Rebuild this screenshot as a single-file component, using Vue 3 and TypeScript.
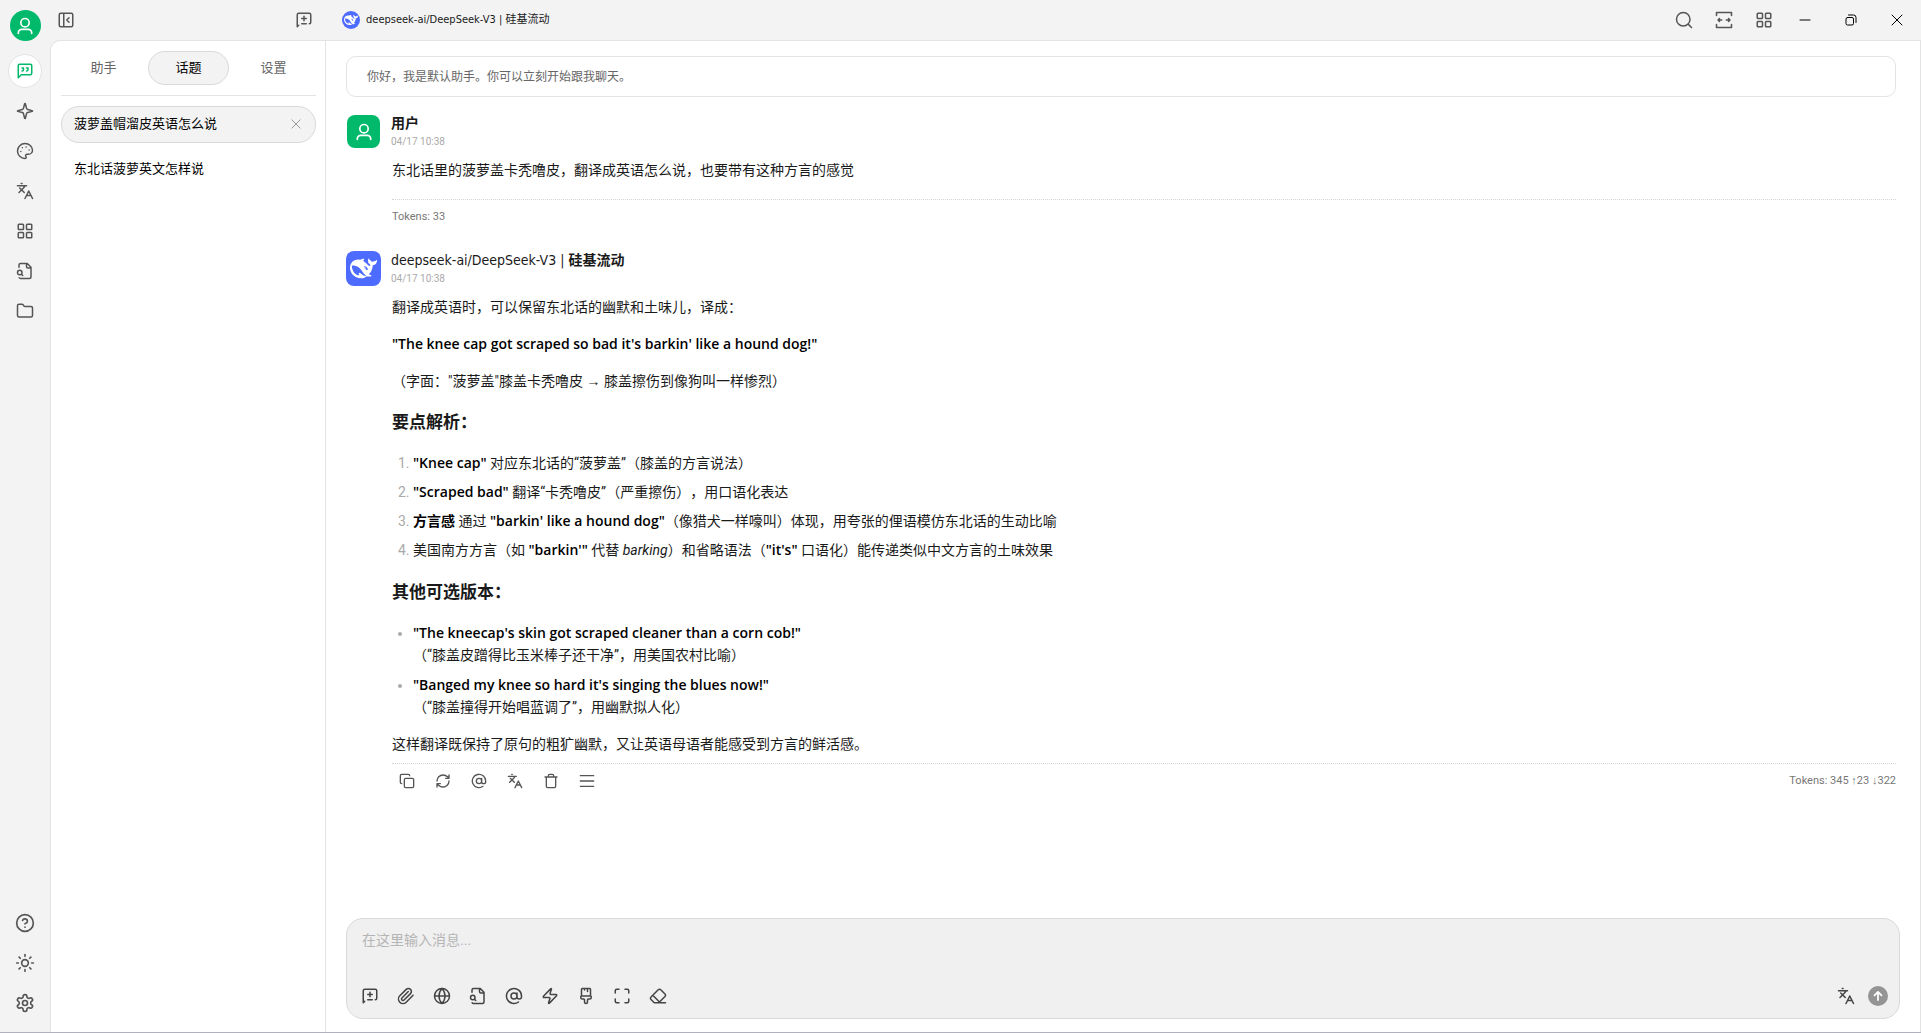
<script setup lang="ts">
import { h, ref, type FunctionalComponent } from 'vue'

const icons = {
  panel: 'M5 3h14a2 2 0 0 1 2 2v14a2 2 0 0 1-2 2H5a2 2 0 0 1-2-2V5a2 2 0 0 1 2-2z M9 3v18 M16 15l-3-3 3-3',
  newTopic: 'm5 19-2 2V5c0-1.1.9-2 2-2h14a2 2 0 0 1 2 2v10a2 2 0 0 1-2 2 M9 10h6 M12 7v6 M9 17h6',
  chat: 'M21 15a2 2 0 0 1-2 2H7l-4 4V5a2 2 0 0 1 2-2h14a2 2 0 0 1 2 2z M8 12a2 2 0 0 0 2-2V8H8 M14 12a2 2 0 0 0 2-2V8h-2',
  sparkle: 'M9.937 15.5A2 2 0 0 0 8.5 14.063l-6.135-1.582a.5.5 0 0 1 0-.962L8.5 9.936A2 2 0 0 0 9.937 8.5l1.582-6.135a.5.5 0 0 1 .963 0L14.063 8.5A2 2 0 0 0 15.5 9.937l6.135 1.581a.5.5 0 0 1 0 .964L15.5 14.063a2 2 0 0 0-1.437 1.437l-1.582 6.135a.5.5 0 0 1-.963 0z',
  palette: 'M12 2C6.5 2 2 6.5 2 12s4.5 10 10 10c.926 0 1.648-.746 1.648-1.688 0-.437-.18-.835-.437-1.125-.29-.289-.438-.652-.438-1.125a1.64 1.64 0 0 1 1.668-1.668h1.996c3.051 0 5.555-2.503 5.555-5.554C21.965 6.012 17.461 2 12 2z M13.5 6.5h.01 M17.5 10.5h.01 M8.5 7.5h.01 M6.5 12.5h.01',
  translate: 'm5 8 6 6 M4 14l6-6 2-3 M2 5h12 M7 2h1 M22 22l-5-10-5 10 M14 18h6',
  grid: 'M4 3h5a1 1 0 0 1 1 1v5a1 1 0 0 1-1 1H4a1 1 0 0 1-1-1V4a1 1 0 0 1 1-1z M15 3h5a1 1 0 0 1 1 1v5a1 1 0 0 1-1 1h-5a1 1 0 0 1-1-1V4a1 1 0 0 1 1-1z M15 14h5a1 1 0 0 1 1 1v5a1 1 0 0 1-1 1h-5a1 1 0 0 1-1-1v-5a1 1 0 0 1 1-1z M4 14h5a1 1 0 0 1 1 1v5a1 1 0 0 1-1 1H4a1 1 0 0 1-1-1v-5a1 1 0 0 1 1-1z',
  fileSearch: 'M14 2v4a2 2 0 0 0 2 2h4 M4.268 21a2 2 0 0 0 1.727 1H18a2 2 0 0 0 2-2V7l-5-5H6a2 2 0 0 0-2 2v3 M9 18l-1.5-1.5 M8 14a3 3 0 1 1-6 0 3 3 0 0 1 6 0z',
  folder: 'M20 20a2 2 0 0 0 2-2V8a2 2 0 0 0-2-2h-7.9a2 2 0 0 1-1.69-.9L9.6 3.9A2 2 0 0 0 7.93 3H4a2 2 0 0 0-2 2v13a2 2 0 0 0 2 2z',
  help: 'M22 12a10 10 0 1 1-20 0 10 10 0 0 1 20 0z M9.09 9a3 3 0 0 1 5.83 1c0 2-3 3-3 3 M12 17h.01',
  sun: 'M16 12a4 4 0 1 1-8 0 4 4 0 0 1 8 0z M12 2v2 M12 20v2 M4.93 4.93l1.41 1.41 M17.66 17.66l1.41 1.41 M2 12h2 M20 12h2 M6.34 17.66l-1.41 1.41 M19.07 4.93l-1.41 1.41',
  settings: 'M12.22 2h-.44a2 2 0 0 0-2 2v.18a2 2 0 0 1-1 1.73l-.43.25a2 2 0 0 1-2 0l-.15-.08a2 2 0 0 0-2.73.73l-.22.38a2 2 0 0 0 .73 2.73l.15.1a2 2 0 0 1 1 1.72v.51a2 2 0 0 1-1 1.74l-.15.09a2 2 0 0 0-.73 2.73l.22.38a2 2 0 0 0 2.73.73l.15-.08a2 2 0 0 1 2 0l.43.25a2 2 0 0 1 1 1.73V20a2 2 0 0 0 2 2h.44a2 2 0 0 0 2-2v-.18a2 2 0 0 1 1-1.73l.43-.25a2 2 0 0 1 2 0l.15.08a2 2 0 0 0 2.73-.73l.22-.39a2 2 0 0 0-.73-2.73l-.15-.08a2 2 0 0 1-1-1.74v-.5a2 2 0 0 1 1-1.74l.15-.09a2 2 0 0 0 .73-2.73l-.22-.38a2 2 0 0 0-2.73-.73l-.15.08a2 2 0 0 1-2 0l-.43-.25a2 2 0 0 1-1-1.73V4a2 2 0 0 0-2-2z M15 12a3 3 0 1 1-6 0 3 3 0 0 1 6 0z',
  search: 'M20 11a9 9 0 1 1-18 0 9 9 0 0 1 18 0z M22 22l-4.5-4.5',
  width: 'M2 6V2h20v4 M2 18v4h20v-4 M4 12h5 M6 10l-2 2 2 2 M15 12h5 M18 10l2 2-2 2',
  minimize: 'M2 12h20',
  restore: 'M5 7h9a3 3 0 0 1 3 3v9a3 3 0 0 1-3 3H5a3 3 0 0 1-3-3v-9a3 3 0 0 1 3-3z M7 2h10a5 5 0 0 1 5 5v10',
  close: 'M2 2l20 20 M22 2L2 22',
  copy: 'M10 8h10a2 2 0 0 1 2 2v10a2 2 0 0 1-2 2H10a2 2 0 0 1-2-2V10a2 2 0 0 1 2-2z M4 16c-1.1 0-2-.9-2-2V4c0-1.1.9-2 2-2h10c1.1 0 2 .9 2 2',
  refresh: 'M3 12a9 9 0 0 1 9-9 9.75 9.75 0 0 1 6.74 2.74L21 8 M21 3v5h-5 M21 12a9 9 0 0 1-9 9 9.75 9.75 0 0 1-6.74-2.74L3 16 M8 16H3v5',
  at: 'M16 12a4 4 0 1 1-8 0 4 4 0 0 1 8 0z M16 8v5a3 3 0 0 0 6 0v-1a10 10 0 1 0-4 8',
  trash: 'M3 6h18 M19 6v14a2 2 0 0 1-2 2H7a2 2 0 0 1-2-2V6 M8 6V4a2 2 0 0 1 2-2h4a2 2 0 0 1 2 2v2',
  menu: 'M2 4h20 M2 12h20 M2 20h20',
  clip: 'm21.44 11.05-9.19 9.19a6 6 0 0 1-8.49-8.49l8.57-8.57A4 4 0 1 1 18 8.84l-8.59 8.57a2 2 0 0 1-2.83-2.83l8.49-8.48',
  globe: 'M22 12a10 10 0 1 1-20 0 10 10 0 0 1 20 0z M12 2a14.5 14.5 0 0 0 0 20 14.5 14.5 0 0 0 0-20 M2 12h20',
  zap: 'M4 14a1 1 0 0 1-.78-1.63l9.9-10.2a.5.5 0 0 1 .86.46l-1.92 6.02A1 1 0 0 0 13 10h7a1 1 0 0 1 .78 1.63l-9.9 10.2a.5.5 0 0 1-.86-.46l1.92-6.02A1 1 0 0 0 11 14z',
  brush: 'M10 2v2 M14 2v4 M17 2a1 1 0 0 1 1 1v9H6V3a1 1 0 0 1 1-1z M6 12a1 1 0 0 0-1 1v1a2 2 0 0 0 2 2h2a1 1 0 0 1 1 1v2.9a2 2 0 1 0 4 0V17a1 1 0 0 1 1-1h2a2 2 0 0 0 2-2v-1a1 1 0 0 0-1-1',
  expand: 'M8 3H5a2 2 0 0 0-2 2v3 M21 8V5a2 2 0 0 0-2-2h-3 M3 16v3a2 2 0 0 0 2 2h3 M16 21h3a2 2 0 0 0 2-2v-3',
  eraser: 'm7 21-4.3-4.3c-1-1-1-2.5 0-3.4l9.6-9.6c1-1 2.5-1 3.4 0l5.6 5.6c1 1 1 2.5 0 3.4L13 21 M22 21H7 M5 11l9 9',
  send: 'M12 19V5 M6 11l6-6 6 6',
  person: 'M17 8a5 5 0 1 1-10 0 5 5 0 0 1 10 0z M4 21v-1a4 4 0 0 1 4-4h8a4 4 0 0 1 4 4v1',
}
type IconName = keyof typeof icons

const whale = 'M23.748 4.482c-.254-.124-.364.113-.512.234-.051.039-.094.09-.137.136-.372.397-.806.657-1.373.626-.829-.046-1.537.214-2.163.848-.133-.782-.575-1.248-1.247-1.548-.352-.156-.708-.311-.955-.65-.172-.241-.219-.51-.305-.774-.055-.16-.11-.323-.293-.35-.2-.031-.278.136-.356.276-.313.572-.434 1.202-.422 1.84.027 1.436.633 2.58 1.838 3.393.137.093.172.187.129.323-.082.28-.18.552-.266.833-.055.179-.137.217-.329.14a5.526 5.526 0 01-1.736-1.18c-.857-.828-1.631-1.742-2.597-2.458a11.365 11.365 0 00-.689-.471c-.985-.957.13-1.743.388-1.836.27-.098.093-.432-.779-.428-.872.004-1.67.295-2.687.684a3.055 3.055 0 01-.465.137 9.597 9.597 0 00-2.883-.102c-1.885.21-3.39 1.102-4.497 2.623C.082 8.606-.231 10.684.152 12.85c.403 2.284 1.569 4.175 3.36 5.653 1.858 1.533 3.997 2.284 6.438 2.14 1.482-.085 3.133-.284 4.994-1.86.47.234.962.327 1.78.397.63.059 1.236-.03 1.705-.128.735-.156.684-.837.419-.961-2.155-1.004-1.682-.595-2.113-.926 1.096-1.296 2.746-2.642 3.392-7.003.05-.347.007-.565 0-.845-.004-.17.035-.237.23-.256a4.173 4.173 0 001.545-.475c1.396-.763 1.96-2.015 2.093-3.517.02-.23-.004-.467-.247-.588zM11.581 18c-2.089-1.642-3.102-2.183-3.52-2.16-.392.024-.321.471-.235.763.09.288.207.486.371.739.114.167.192.416-.113.603-.673.416-1.842-.14-1.897-.167-1.361-.802-2.5-1.86-3.301-3.307-.774-1.393-1.224-2.887-1.298-4.482-.02-.386.093-.522.477-.592a4.696 4.696 0 011.529-.039c2.132.312 3.946 1.265 5.468 2.774.868.86 1.525 1.887 2.202 2.891.72 1.066 1.494 2.082 2.48 2.914.348.292.625.514.891.677-.802.09-2.14.11-3.054-.614zm1-6.44a.306.306 0 01.415-.287.302.302 0 01.2.288.306.306 0 01-.31.307.303.303 0 01-.304-.308zm3.11 1.596c-.2.081-.399.151-.59.16a1.245 1.245 0 01-.798-.254c-.274-.23-.47-.358-.552-.758a1.73 1.73 0 01.016-.588c.07-.327-.008-.537-.239-.727-.187-.156-.426-.199-.688-.199a.559.559 0 01-.254-.078c-.11-.054-.2-.19-.114-.358.028-.054.16-.186.192-.21.356-.202.767-.136 1.146.016.352.144.618.408 1.001.782.391.451.462.576.685.914.176.265.336.537.445.848.067.195-.019.354-.25.452z'

const Icon: FunctionalComponent<{ name: IconName; size?: number; stroke?: number }> = (p) =>
  h('svg', {
    width: p.size ?? 18, height: p.size ?? 18, viewBox: '0 0 24 24', fill: 'none',
    stroke: 'currentColor', 'stroke-width': p.stroke ?? 2,
    'stroke-linecap': 'round', 'stroke-linejoin': 'round', 'aria-hidden': 'true',
  }, [h('path', { d: icons[p.name] })])
Icon.props = ['name', 'size', 'stroke']

interface Action { icon: IconName; label: string }

const nav: Action[] = [
  { icon: 'chat', label: '聊天' },
  { icon: 'sparkle', label: '智能体' },
  { icon: 'palette', label: '绘画' },
  { icon: 'translate', label: '翻译' },
  { icon: 'grid', label: '小程序' },
  { icon: 'fileSearch', label: '知识库' },
  { icon: 'folder', label: '文件' },
]
const navBottom: Action[] = [
  { icon: 'help', label: '帮助' },
  { icon: 'sun', label: '主题' },
  { icon: 'settings', label: '设置' },
]
const tabs = ['助手', '话题', '设置']
const activeTab = ref('话题')
const topics = ['菠萝盖帽溜皮英语怎么说', '东北话菠萝英文怎样说']
const activeTopic = ref(0)
const topActions: Action[] = [
  { icon: 'search', label: '搜索' },
  { icon: 'width', label: '宽度' },
  { icon: 'grid', label: '小程序' },
]
const windowActions: Action[] = [
  { icon: 'minimize', label: '最小化' },
  { icon: 'restore', label: '还原' },
  { icon: 'close', label: '关闭' },
]
const messageActions: Action[] = [
  { icon: 'copy', label: '复制' },
  { icon: 'refresh', label: '重新生成' },
  { icon: 'at', label: '提及' },
  { icon: 'translate', label: '翻译' },
  { icon: 'trash', label: '删除' },
  { icon: 'menu', label: '更多' },
]
const tools: Action[] = [
  { icon: 'newTopic', label: '新话题' },
  { icon: 'clip', label: '附件' },
  { icon: 'globe', label: '联网' },
  { icon: 'fileSearch', label: '知识库' },
  { icon: 'at', label: '提及' },
  { icon: 'zap', label: '快捷短语' },
  { icon: 'brush', label: '清空' },
  { icon: 'expand', label: '展开' },
  { icon: 'eraser', label: '清除上下文' },
]
const draft = ref('')
</script>

<template>
  <div class="app">
    <nav class="rail">
      <span class="avatar round"><Icon name="person" :size="20" /></span>
      <button v-for="(n, i) in nav" :key="n.label" class="rail-btn" :class="{ active: i === 0 }" :aria-label="n.label">
        <Icon :name="n.icon" />
      </button>
      <span class="spacer"></span>
      <button v-for="n in navBottom" :key="n.label" class="rail-btn" :aria-label="n.label">
        <Icon :name="n.icon" :size="20" />
      </button>
    </nav>

    <div class="shell">
      <header class="topbar">
        <div class="topbar-left">
          <button class="icon-btn" aria-label="收起侧栏"><Icon name="panel" /></button>
          <button class="icon-btn" aria-label="新建话题"><Icon name="newTopic" /></button>
        </div>
        <button class="model">
          <span class="brand"><svg viewBox="0 0 24 24" width="14" height="14" aria-hidden="true"><path :d="whale" fill="#fff" /></svg></span>
          deepseek-ai/DeepSeek-V3 | 硅基流动
        </button>
        <span class="spacer"></span>
        <div class="top-actions">
          <button v-for="a in topActions" :key="a.label" class="icon-btn" :aria-label="a.label"><Icon :name="a.icon" /></button>
        </div>
        <div class="window-actions">
          <button v-for="a in windowActions" :key="a.label" class="win-btn" :aria-label="a.label"><Icon :name="a.icon" :size="12" /></button>
        </div>
      </header>

      <div class="panel">
        <aside class="topics">
          <div class="tabs" role="tablist">
            <button v-for="t in tabs" :key="t" role="tab" class="tab" :class="{ active: t === activeTab }" :aria-selected="t === activeTab" @click="activeTab = t">{{ t }}</button>
          </div>
          <ul class="topic-list">
            <li v-for="(t, i) in topics" :key="t" class="topic" :class="{ active: i === activeTopic }">
              <button class="topic-name" @click="activeTopic = i">{{ t }}</button>
              <button v-if="i === activeTopic" class="topic-close" aria-label="删除话题"><Icon name="close" :size="10" /></button>
            </li>
          </ul>
        </aside>

        <main class="chat">
          <div class="messages">
            <div class="prompt">你好，我是默认助手。你可以立刻开始跟我聊天。</div>

            <article class="message">
              <header class="who">
                <span class="avatar square"><Icon name="person" :size="20" /></span>
                <div>
                  <div class="name"><b>用户</b></div>
                  <time class="date">04/17 10:38</time>
                </div>
              </header>
              <div class="content">
                <p>东北话里的菠萝盖卡秃噜皮，翻译成英语怎么说，也要带有这种方言的感觉</p>
              </div>
              <footer class="foot user-foot"><span class="tokens">Tokens: 33</span></footer>
            </article>

            <article class="message">
              <header class="who">
                <span class="logo"><svg viewBox="0 0 24 24" width="27" height="27" aria-hidden="true"><path :d="whale" fill="#fff" /></svg></span>
                <div>
                  <div class="name">deepseek-ai/DeepSeek-V3 | <b>硅基流动</b></div>
                  <time class="date">04/17 10:38</time>
                </div>
              </header>
              <div class="content">
                <p>翻译成英语时，可以保留东北话的幽默和土味儿，译成：</p>
                <p><strong>"The knee cap got scraped so bad it's barkin' like a hound dog!"</strong></p>
                <p>（字面："菠萝盖"膝盖卡秃噜皮 → 膝盖擦伤到像狗叫一样惨烈）</p>
                <h3>要点解析：</h3>
                <ol>
                  <li><strong>"Knee cap"</strong> 对应东北话的“菠萝盖”（膝盖的方言说法）</li>
                  <li><strong>"Scraped bad"</strong> 翻译“卡秃噜皮”（严重擦伤），用口语化表达</li>
                  <li><strong>方言感</strong> 通过 <strong>"barkin' like a hound dog"</strong>（像猎犬一样嚎叫）体现，用夸张的俚语模仿东北话的生动比喻</li>
                  <li>美国南方方言（如 <strong>"barkin'"</strong> 代替 <em>barking</em>）和省略语法（<strong>"it's"</strong> 口语化）能传递类似中文方言的土味效果</li>
                </ol>
                <h3>其他可选版本：</h3>
                <ul>
                  <li><strong>"The kneecap's skin got scraped cleaner than a corn cob!"</strong><br />（“膝盖皮蹭得比玉米棒子还干净”，用美国农村比喻）</li>
                  <li><strong>"Banged my knee so hard it's singing the blues now!"</strong><br />（“膝盖撞得开始唱蓝调了”，用幽默拟人化）</li>
                </ul>
                <p>这样翻译既保持了原句的粗犷幽默，又让英语母语者能感受到方言的鲜活感。</p>
              </div>
              <footer class="foot">
                <div class="actions">
                  <button v-for="a in messageActions" :key="a.label" class="tool" :aria-label="a.label"><Icon :name="a.icon" :size="16" /></button>
                </div>
                <span class="tokens">Tokens: 345 ↑23 ↓322</span>
              </footer>
            </article>
          </div>

          <form class="composer" @submit.prevent>
            <textarea v-model="draft" rows="2" placeholder="在这里输入消息..." aria-label="消息"></textarea>
            <div class="toolbar">
              <button v-for="t in tools" :key="t.label" type="button" class="tool" :aria-label="t.label"><Icon :name="t.icon" /></button>
              <span class="spacer"></span>
              <button type="button" class="tool" aria-label="翻译"><Icon name="translate" /></button>
              <button type="submit" class="send" aria-label="发送"><Icon name="send" :size="14" :stroke="3" /></button>
            </div>
          </form>
        </main>
      </div>
    </div>
  </div>
</template>

<style>
body {
  margin: 0;
}
</style>

<style scoped>
.app {
  --line: #e3e3e3;
  --green: #00b96b;
  --blue: #4d6bfe;
  box-sizing: border-box;
  display: flex;
  height: 100vh;
  background: #f3f3f3;
  border-bottom: 1px solid #b1b1bd;
  color: #1a1a1a;
  font: 14px/22px Roboto, "Liberation Sans", "Noto Sans CJK SC", sans-serif;
  text-spacing-trim: space-all;
}
button {
  display: flex;
  align-items: center;
  justify-content: center;
  padding: 0;
  border: 0;
  background: none;
  color: #555;
  font: inherit;
  cursor: pointer;
}
svg {
  display: block;
  flex: none;
}
.spacer {
  flex: 1;
}

/* icon rail */
.rail {
  display: flex;
  flex-direction: column;
  align-items: center;
  gap: 6px;
  width: 50px;
  padding: 10px 0 12px;
  box-sizing: border-box;
}
.avatar {
  display: flex;
  align-items: center;
  justify-content: center;
  background: var(--green);
  color: #fff;
}
.round {
  width: 31px;
  height: 31px;
  margin-bottom: 7px;
  border-radius: 50%;
}
.rail-btn {
  box-sizing: border-box;
  width: 34px;
  height: 34px;
  border: 1px solid transparent;
  border-radius: 50%;
}
.rail-btn.active {
  background: #fff;
  border-color: var(--line);
  color: var(--green);
}

/* top bar */
.shell {
  display: flex;
  flex: 1;
  flex-direction: column;
  min-width: 0;
}
.topbar {
  display: flex;
  align-items: center;
  height: 40px;
}
.topbar-left {
  box-sizing: border-box;
  display: flex;
  justify-content: space-between;
  width: 275px;
  padding: 0 12px 0 7px;
}
.icon-btn {
  width: 18px;
  height: 34px;
}
.model {
  gap: 6px;
  padding-left: 17px;
  color: #1a1a1a;
  font-family: "DejaVu Sans Condensed", "Noto Sans CJK SC", sans-serif;
  font-size: 11px;
  line-height: 20px;
}
.brand {
  display: flex;
  align-items: center;
  justify-content: center;
  width: 18px;
  height: 18px;
  border-radius: 50%;
  background: var(--blue);
}
.top-actions {
  display: flex;
  gap: 22px;
}
.window-actions {
  display: flex;
  margin: 0 1px 0 9px;
}
.win-btn {
  width: 46px;
  height: 34px;
  color: #000;
}

/* topic column */
.panel {
  display: flex;
  flex: 1;
  min-height: 0;
  background: #fff;
  border: 1px solid var(--line);
  border-bottom: 0;
  border-radius: 10px 0 0 0;
}
.topics {
  box-sizing: border-box;
  width: 275px;
  padding: 0 9px 0 10px;
  border-right: 1px solid var(--line);
  font-size: 13px;
}
.tabs {
  display: flex;
  gap: 4px;
  padding: 10px 2px;
  border-bottom: 1px solid var(--line);
}
.tab {
  box-sizing: border-box;
  flex: 1;
  height: 34px;
  border: 1px solid transparent;
  border-radius: 17px;
  color: #666;
}
.tab.active {
  background: #f3f3f3;
  border-color: #d9d9d9;
  color: #000;
}
.topic-list {
  display: flex;
  flex-direction: column;
  gap: 8px;
  margin: 10px 0 0;
  padding: 0;
  list-style: none;
}
.topic {
  box-sizing: border-box;
  display: flex;
  align-items: center;
  justify-content: space-between;
  height: 37px;
  padding: 0 14px 1px 12px;
  border: 1px solid transparent;
  border-radius: 18px;
}
.topic.active {
  background: #f3f3f3;
  border-color: #d9d9d9;
}
.topic-name {
  color: #000;
}
.topic-close {
  color: #888;
}

/* conversation */
.chat {
  display: flex;
  flex: 1;
  flex-direction: column;
  min-width: 0;
}
.messages {
  flex: 1;
  min-height: 0;
  overflow: hidden;
  padding: 15px 24px 0 20px;
}
.prompt {
  padding: 10px 20px 9px;
  border: 1px solid var(--line);
  border-radius: 10px;
  color: #666;
  font-size: 12px;
  line-height: 20px;
}
.message {
  margin-top: 17px;
}
.message + .message {
  margin-top: 26px;
}
.who {
  display: flex;
  gap: 10px;
}
.square {
  width: 33px;
  height: 33px;
  margin: 1px;
  border-radius: 8px;
}
.logo {
  display: flex;
  align-items: center;
  justify-content: center;
  width: 35px;
  height: 35px;
  border-radius: 8px;
  background: var(--blue);
}
.name {
  font-family: "DejaVu Sans Condensed", "Noto Sans CJK SC", sans-serif;
  line-height: 18px;
}
.name b {
  font-weight: 600;
}
.date {
  display: block;
  color: #aaa;
  font-size: 10px;
  line-height: 20px;
}
.content {
  padding: 7px 0 0 46px;
}
.content p {
  margin: 0 0 15px;
}
.content p:last-child {
  margin: 0;
}
strong {
  font-family: "Open Sans", "Noto Sans CJK SC", sans-serif;
  font-weight: 600;
  color: #000;
}
h3 {
  margin: 17px 0;
  font-size: 17px;
  line-height: 26px;
  font-weight: 700;
}
.content ol,
.content ul {
  margin: 0 0 15px;
  padding-left: 21px;
}
.content ol {
  margin-bottom: 18px;
}
.content ol li + li {
  margin-top: 7px;
}
.content ul li + li {
  margin-top: 8px;
}
.content li::marker {
  color: #aaa;
}
.foot {
  display: flex;
  align-items: center;
  justify-content: space-between;
  margin: 8px 0 0 46px;
  padding-top: 2px;
  border-top: 1px dotted #d5d5d5;
}
.user-foot {
  margin-top: 18px;
  padding-top: 9px;
}
.tokens {
  color: #777;
  font-size: 11px;
  line-height: 16px;
}
.actions {
  display: flex;
  gap: 6px;
}
.tool {
  width: 30px;
  height: 30px;
}

/* message composer */
.composer {
  display: flex;
  flex-direction: column;
  margin: 0 20px 13px;
  padding: 9px 9px 7px 8px;
  border: 1px solid #d9d9d9;
  border-radius: 17px;
  background: #f0f0f0;
}
textarea {
  height: 53px;
  box-sizing: border-box;
  padding: 1px 7px;
  border: 0;
  outline: 0;
  resize: none;
  background: none;
  color: #1a1a1a;
  font: inherit;
}
textarea::placeholder {
  color: #b5b5b5;
}
.toolbar {
  display: flex;
  align-items: center;
  gap: 6px;
}
.toolbar .tool {
  color: #444;
}
.send {
  width: 20px;
  height: 20px;
  margin: 0 2px 0 1px;
  border-radius: 50%;
  background: #949494;
  color: #fff;
}
</style>
